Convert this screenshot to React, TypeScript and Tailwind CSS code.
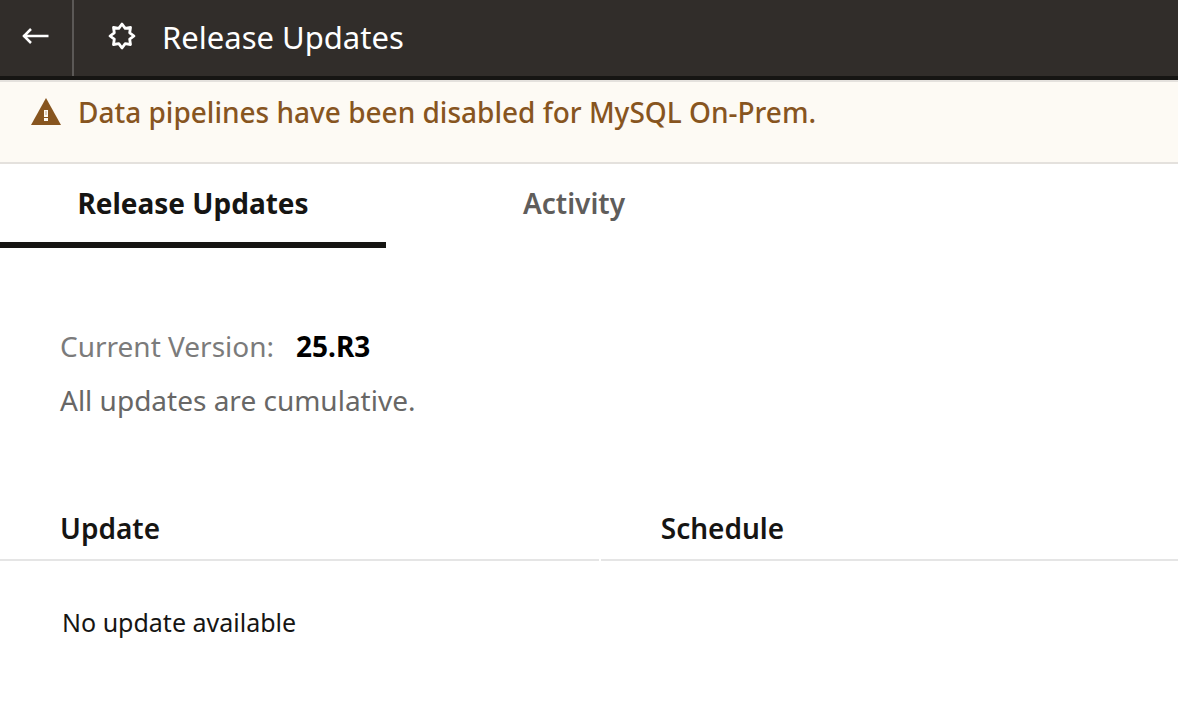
import React, { useState } from "react";

const TABS = ["Release Updates", "Activity"];

function ArrowLeft() {
  return (
    <svg width="28" height="18" viewBox="0 0 28 18" fill="none" stroke="currentColor" strokeWidth="2.5" aria-hidden="true">
      <path d="M1 9H26.500M9 2L2 9L9 16" />
    </svg>
  );
}

function StarIcon() {
  return (
    <svg width="28" height="28" viewBox="-14 -14 28 28" fill="none" stroke="currentColor" strokeWidth="2.8" strokeLinejoin="round" aria-hidden="true">
      <path d="M0-12L3.2-7.7L8.5-8.5L7.7-3.2L12 0L7.7 3.2L8.5 8.5L3.2 7.7L0 12L-3.2 7.7L-8.5 8.5L-7.7 3.2L-12 0L-7.7-3.2L-8.5-8.5L-3.2-7.7Z" />
    </svg>
  );
}

function WarningIcon() {
  return (
    <svg width="30" height="27" viewBox="0 0 30 27" aria-hidden="true" className="shrink-0">
      <path fill="currentColor" d="M15 0L30 27H0Z" />
      <path fill="#fdfaf4" d="M13 12h4v7h-4zM13 20h4v3h-4z" />
      <path fill="currentColor" d="M14 13h2v4h-2z" opacity=".25" />
    </svg>
  );
}

export default function App() {
  const [active, setActive] = useState(0);

  return (
    <div className="min-h-screen bg-white font-['Noto_Sans',sans-serif] text-[#161513]">
      <header className="flex h-20 items-stretch border-b-4 border-[#161513] bg-[#312d2a] text-white">
        <button type="button" aria-label="Back" className="flex w-[74px] items-center justify-center border-r-2 border-[#5b5856] pb-1">
          <ArrowLeft />
        </button>
        <div className="flex items-center pb-1 pl-[34px]">
          <StarIcon />
          <h1 className="pt-[2px] pl-[26px] text-[31px] leading-10 font-normal">Release Updates</h1>
        </div>
      </header>

      <div role="alert" className="flex h-[84px] items-start border-y-2 border-[#e4e1dd] bg-[#fdfaf4] px-[31px] pt-4 text-[#87551f]">
        <WarningIcon />
        <p className="-mt-1 pl-[17px] text-[28px] leading-9 font-medium">
          Data pipelines have been disabled for MySQL On-Prem.
        </p>
      </div>

      <div role="tablist" className="flex">
        {TABS.map((tab, i) => (
          <button
            key={tab}
            type="button"
            role="tab"
            aria-selected={active === i}
            onClick={() => setActive(i)}
            className={`h-[84px] border-b-6 text-[28px] leading-9 ${
              active === i
                ? "w-[386px] border-[#161513] font-bold text-[#161513]"
                : "w-[376px] border-transparent font-semibold text-[#5f5d5b]"
            }`}
          >
            {tab}
          </button>
        ))}
      </div>

      <main className="pt-20">
        <div className="flex flex-col gap-[18px] px-[60px] text-[28px] leading-9">
          <p className="text-[#7b7b7b]">
            Current Version:
            <strong className="ml-[22px] font-bold text-black">25.R3</strong>
          </p>
          <p className="text-[#686766]">All updates are cumulative.</p>
        </div>

        <table className="mt-[77px] w-full table-fixed border-collapse text-left">
          <thead>
            <tr className="h-[66px] text-[28px] leading-9">
              <th scope="col" className="w-[51%] p-0 font-semibold">
                <div className="mr-[2px] border-b-2 border-[#e5e5e5] pt-[14px] pb-[13px] pl-[60px]">Update</div>
              </th>
              <th scope="col" className="p-0 font-semibold">
                <div className="border-b-2 border-[#e5e5e5] pt-[14px] pb-[13px] pl-[60px]">Schedule</div>
              </th>
            </tr>
          </thead>
          <tbody>
            <tr className="text-[25px] leading-9">
              <td className="pt-[43px] pl-[62px]">No update available</td>
              <td />
            </tr>
          </tbody>
        </table>
      </main>
    </div>
  );
}
